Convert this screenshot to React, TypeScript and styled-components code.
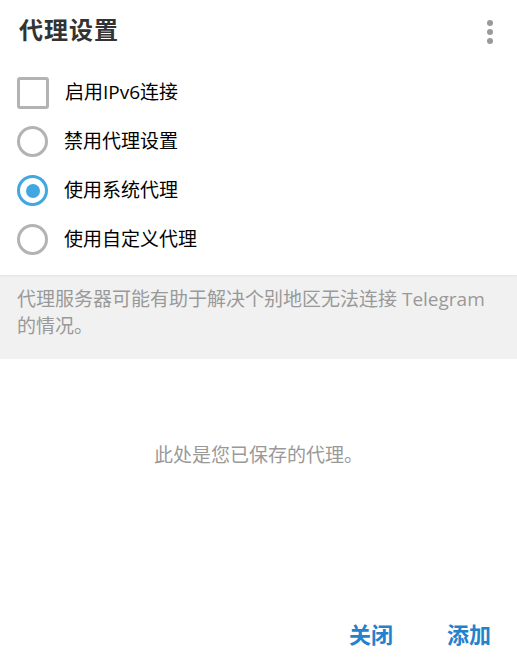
import React from "react";
import styled, { createGlobalStyle } from "styled-components";

const Global = createGlobalStyle`
  html, body { margin: 0; padding: 0; background: #fff; }
  body { font-family: "Open Sans", "Noto Sans CJK SC", sans-serif; }
`;

const Page = styled.div`
  width: 517px;
  height: 666px;
  display: flex;
  flex-direction: column;
  background: #fff;
  overflow: hidden;
`;

const Header = styled.div`
  display: flex;
  align-items: center;
  justify-content: space-between;
  height: 56px;
  padding: 0 24px 0 19px;
  box-sizing: border-box;
`;

const Title = styled.h1`
  margin: 0;
  font-size: 24px;
  font-weight: 700;
  color: #333;
  font-family: "Open Sans", "Noto Sans CJK SC", sans-serif;
  letter-spacing: 1px;
`;

const Kebab = styled.div`
  display: flex;
  flex-direction: column;
  gap: 3px;
  margin-top: 8px;
`;

const Dot = styled.span`
  width: 6px;
  height: 6px;
  border-radius: 50%;
  background: #999;
`;

const Options = styled.div`
  display: flex;
  flex-direction: column;
  padding-top: 12px;
`;

const Row = styled.div`
  display: flex;
  align-items: center;
  height: 49px;
  padding-left: 17px;
  gap: 16px;
  font-size: 19px;
  color: #000;
`;

const Check = styled.span`
  width: 32px;
  height: 32px;
  box-sizing: border-box;
  border: 3px solid #b3b3b3;
  border-radius: 3px;
`;

const Radio = styled.span<{ $on?: boolean }>`
  width: 31px;
  height: 31px;
  box-sizing: border-box;
  border-radius: 50%;
  border: 3px solid ${(p) => (p.$on ? "#40a7e3" : "#b3b3b3")};
  display: flex;
  align-items: center;
  justify-content: center;
  &::after {
    content: "";
    display: ${(p) => (p.$on ? "block" : "none")};
    width: 14px;
    height: 14px;
    border-radius: 50%;
    background: #40a7e3;
  }
`;

const Label = styled.span`
  line-height: 1;
`;

const Info = styled.div`
  margin-top: 11px;
  background: #f1f1f1;
  box-shadow: inset 0 3px 3px -2px rgba(0, 0, 0, 0.06);
  padding: 11px 17px 19px;
  font-size: 19px;
  line-height: 27px;
  color: #999;
`;

const Empty = styled.div`
  flex: 1;
  display: flex;
  justify-content: center;
  padding-top: 81px;
  font-size: 19px;
  color: #999;
`;

const Footer = styled.div`
  display: flex;
  justify-content: flex-end;
  gap: 54px;
  padding: 0 26px 17px 0;
`;

const Btn = styled.button`
  background: none;
  border: none;
  padding: 0;
  font-family: "Open Sans", "Noto Sans CJK SC", sans-serif;
  font-size: 22px;
  font-weight: 700;
  color: #2481cc;
  cursor: pointer;
`;

export default function App() {
  return (
    <Page>
      <Global />
      <Header>
        <Title>代理设置</Title>
        <Kebab>
          <Dot />
          <Dot />
          <Dot />
        </Kebab>
      </Header>
      <Options>
        <Row>
          <Check />
          <Label>启用IPv6连接</Label>
        </Row>
        <Row>
          <Radio />
          <Label>禁用代理设置</Label>
        </Row>
        <Row>
          <Radio $on />
          <Label>使用系统代理</Label>
        </Row>
        <Row>
          <Radio />
          <Label>使用自定义代理</Label>
        </Row>
      </Options>
      <Info>代理服务器可能有助于解决个别地区无法连接 Telegram 的情况。</Info>
      <Empty>此处是您已保存的代理。</Empty>
      <Footer>
        <Btn>关闭</Btn>
        <Btn>添加</Btn>
      </Footer>
    </Page>
  );
}
